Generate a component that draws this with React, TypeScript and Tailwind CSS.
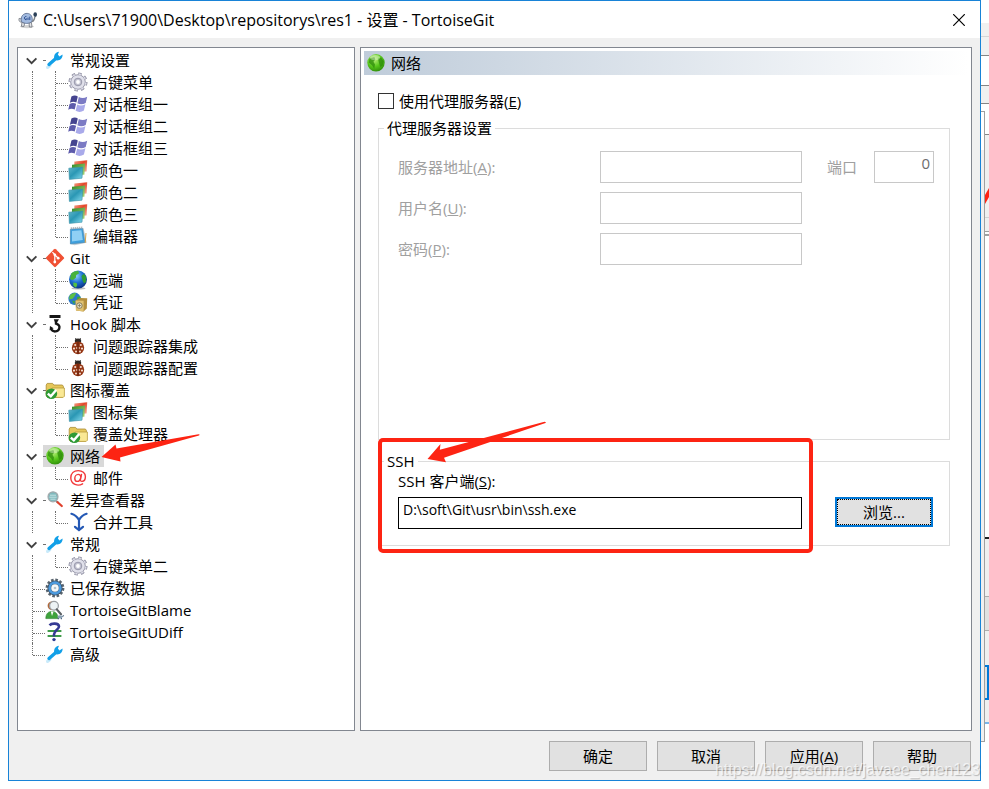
import { useState } from 'react';
import type { ReactNode } from 'react';

/* ---------- Icons ---------- */

function Svg({ children, box = '0 0 20 20' }: { children: ReactNode; box?: string }) {
  return (
    <svg viewBox={box} className="w-5 h-5 shrink-0" aria-hidden="true">
      {children}
    </svg>
  );
}

function WrenchIcon() {
  return (
    <Svg>
      <path d="M2.5 17.5 L5 15.5" stroke="#c9eafa" strokeWidth="3" strokeLinecap="round" />
      <path d="M4 14.5 L12 7.5" stroke="#12a0e8" strokeWidth="3.4" strokeLinecap="round" />
      <path
        d="M9.2 8.8 C8.6 5.2 10.4 2.2 14 1.8 L12.9 4.6 L14.4 6.4 L17.5 4.6 C18 8.2 15.2 10.6 11.8 10.4 Z"
        fill="#12a0e8"
      />
    </Svg>
  );
}

function GearIcon() {
  return (
    <Svg>
      <circle cx="10" cy="10" r="8" fill="none" stroke="#8d8da0" strokeWidth="3" strokeDasharray="3.3 2.98" />
      <circle cx="10" cy="10" r="7.3" fill="#e0e0ea" stroke="#8d8da0" strokeWidth="0.9" />
      <circle cx="10" cy="10" r="7.9" fill="none" stroke="#dcdce7" strokeWidth="1.6" strokeDasharray="2.2 4" strokeDashoffset="-0.5" />
      <circle cx="10" cy="10" r="3.8" fill="#c3c3d1" stroke="#9292a5" strokeWidth="0.9" />
      <circle cx="10" cy="10" r="1.9" fill="#fff" />
    </Svg>
  );
}

function WindowsIcon() {
  return (
    <Svg>
      <path d="M3.4 2.6 C5.6 1 8 1.2 9.8 2.4 L8.4 8.6 C6.4 7.4 4.2 7.3 1.9 8.8 Z" fill="#454490" />
      <path d="M10.8 3 C13.2 4.4 16 4.6 19.2 2.8 L17.7 9.1 C14.6 10.7 11.8 10.6 9.4 9.3 Z" fill="#7b7ac4" />
      <path d="M1.6 9.9 C3.8 8.5 6.2 8.6 8.1 9.8 L6.7 15.6 C4.6 14.5 2.4 14.3 0.2 15.8 Z" fill="#5d5bab" />
      <path d="M9.2 10.5 C11.4 11.7 14.2 11.8 17.4 10.2 L15.9 16.6 C13 18.5 10.1 18.3 7.6 16.8 Z" fill="#a9aaea" />
    </Svg>
  );
}

function ColorsIcon() {
  return (
    <Svg>
      <defs>
        <linearGradient id="clrRed" x1="0" y1="0" x2="1" y2="1">
          <stop offset="0" stopColor="#f3a58c" />
          <stop offset="0.45" stopColor="#e4472a" />
          <stop offset="1" stopColor="#f2b59e" />
        </linearGradient>
        <linearGradient id="clrGreen" x1="0" y1="0" x2="1" y2="1">
          <stop offset="0" stopColor="#2f8a24" />
          <stop offset="1" stopColor="#a9d67c" />
        </linearGradient>
        <linearGradient id="clrBlue" x1="0" y1="0" x2="1" y2="1">
          <stop offset="0" stopColor="#62b7cb" />
          <stop offset="0.45" stopColor="#2a97b4" />
          <stop offset="1" stopColor="#86dcef" />
        </linearGradient>
      </defs>
      <path d="M6.4 1.4 L19.2 0.3 L18.6 11.4 L6 12 Z" fill="url(#clrRed)" />
      <path d="M4 4.8 L17 3.6 L16.4 14.8 L3.8 15 Z" fill="url(#clrGreen)" />
      <path d="M0.8 8.2 L14.8 7 L14 18.2 L1.4 19.4 Z" fill="url(#clrBlue)" stroke="#3d90a6" strokeWidth="0.6" />
    </Svg>
  );
}

function NotepadIcon() {
  return (
    <Svg>
      <path d="M3 3 L15.6 2.2 L18.6 16.8 L6.5 19.2 L2 17.8 Z" fill="#c3cdd2" />
      <path d="M2.4 3.2 L14.6 2.5 L16.8 16.4 L2.4 18 Z" fill="#3f9fdc" stroke="#4787b2" strokeWidth="0.6" />
      <path d="M4 5 L13.4 4.3 L14.8 14 L4 15.6 Z" fill="#8fd0f5" />
      <path d="M2.8 2.3 L15 1.5" stroke="#9ea5aa" strokeWidth="2" strokeDasharray="1 1" />
      <path d="M17.2 16.8 L18 7" stroke="#d8a64a" strokeWidth="1" />
    </Svg>
  );
}

function GitIcon() {
  return (
    <Svg>
      <rect x="3.2" y="3.2" width="13.6" height="13.6" rx="1.2" transform="rotate(45 10 10)" fill="#f05033" />
      <path d="M7.4 4.2 L9.8 6.6 V14 M10 7 L13 10" stroke="#fff" strokeWidth="1.2" fill="none" />
      <circle cx="9.8" cy="6.8" r="1.4" fill="#fff" />
      <circle cx="9.8" cy="14" r="1.4" fill="#fff" />
      <circle cx="13.2" cy="10.2" r="1.4" fill="#fff" />
    </Svg>
  );
}

function GlobeIcon() {
  return (
    <Svg>
      <defs>
        <radialGradient id="globeBlue" cx="0.4" cy="0.3" r="0.75">
          <stop offset="0" stopColor="#8fd3ff" />
          <stop offset="0.5" stopColor="#1d6fd0" />
          <stop offset="1" stopColor="#0a2c7c" />
        </radialGradient>
      </defs>
      <ellipse cx="10.5" cy="18.4" rx="7" ry="1.2" fill="#bbb" />
      <circle cx="10" cy="9.6" r="9" fill="url(#globeBlue)" />
      <path d="M3 4 C5 1.5 8 0.8 10.4 1.2 L11 3.5 L8.2 5 L8 7.6 L5 10 L2 9.2 Z" fill="#46b23c" />
      <path d="M13.4 6 L16 3.8 L18.2 7 L18 12 L16 13.6 L14.6 10.4 Z" fill="#2f9d35" />
      <path d="M5.4 12.4 L8.6 13 L9.2 15 L8 17.8 L5.4 15.8 Z" fill="#57c140" />
    </Svg>
  );
}

function CredentialIcon() {
  return (
    <Svg>
      <circle cx="6.6" cy="6.8" r="6.2" fill="#2a78c8" />
      <path d="M1.6 3.8 C3.4 1.4 6 0.6 8.2 1.2 L6.4 4.6 L4.6 6.8 L1 7.4 Z" fill="#5cbf45" />
      <path d="M9 5 L12.3 4.6 L12.4 8.4 L9.6 9.6 Z M4 8.6 L7 9.2 L6 12.6 Z" fill="#3ea93b" />
      <path d="M7.6 8.4 L12.2 6 L19.2 6.2 L18.8 16.6 L15.6 19.4 L8 18.6 Z" fill="#b48f3d" />
      <path d="M7.6 8.4 L15.6 8.8 L15.6 19.4 L8 18.6 Z" fill="#e0c171" />
      <circle cx="11.4" cy="13.6" r="2.8" fill="#eee6cd" stroke="#77714f" strokeWidth="0.9" />
      <path d="M11.4 11.8 V15.4 M9.6 13.6 H13.2" stroke="#77714f" strokeWidth="0.8" />
    </Svg>
  );
}

function HookIcon() {
  return (
    <Svg>
      <path d="M4.5 1 H15.5 V4 H4.5 Z" fill="#151515" />
      <path d="M8.8 5.2 H14 L12 8.6 H10 Z" fill="#151515" />
      <path
        d="M11 7.4 V9.6 C14 10.6 15 12.2 14.2 14.6 C13 18 8 18.6 6 15"
        fill="none"
        stroke="#151515"
        strokeWidth="2.4"
      />
      <path d="M4.6 16.2 L5 12 L8.6 14.2 Z" fill="#151515" />
    </Svg>
  );
}

function BugIcon() {
  return (
    <Svg>
      <path d="M7.4 2 L8.6 4 M12.6 2 L11.4 4" stroke="#333" strokeWidth="0.9" />
      <ellipse cx="10" cy="5" rx="3.2" ry="2.4" fill="#2e2926" />
      <ellipse cx="10" cy="11.8" rx="6.2" ry="6.4" fill="#953614" />
      <path d="M10 5.6 V18" stroke="#501b0a" strokeWidth="0.8" />
      <g fill="#f5ddd0">
        <circle cx="7.2" cy="9" r="1.1" />
        <circle cx="12.8" cy="9" r="1.1" />
        <circle cx="6" cy="12.6" r="1.1" />
        <circle cx="14" cy="12.6" r="1.1" />
        <circle cx="8.6" cy="12" r="0.7" />
        <circle cx="11.4" cy="12" r="0.7" />
        <circle cx="8" cy="15.6" r="1" />
        <circle cx="12" cy="15.6" r="1" />
      </g>
    </Svg>
  );
}

function FolderCheckIcon() {
  return (
    <Svg>
      <path d="M1.2 5 L2.2 3.4 H7.6 L8.8 5 H17.4 L18.4 6.4 V16 L17.4 17.2 H2.2 L1.2 16 Z" fill="#e6c75a" stroke="#a98b32" strokeWidth="0.8" />
      <path d="M7 8 H19.4 V16.2 L18.2 17.4 H7 Z" fill="#fae894" stroke="#b79a3c" strokeWidth="0.8" />
      <ellipse cx="6.4" cy="13.8" rx="5.8" ry="5.2" fill="#2f9a35" />
      <path d="M2.8 13.6 L5.8 16.2 L11.2 10" stroke="#fff" strokeWidth="2.4" fill="none" />
    </Svg>
  );
}

function NetworkIcon() {
  return (
    <Svg>
      <defs>
        <radialGradient id="netGreen" cx="0.4" cy="0.3" r="0.75">
          <stop offset="0" stopColor="#b9f07a" />
          <stop offset="0.55" stopColor="#58c71c" />
          <stop offset="1" stopColor="#2c8a08" />
        </radialGradient>
      </defs>
      <circle cx="10" cy="9.8" r="8.7" fill="url(#netGreen)" />
      <path d="M3.4 5.6 L8.4 4 L9.4 6.6 L7.4 8.8 L9 11.4 L8.2 15.8 L6.2 12.4 L2.8 9.6 Z" fill="#2e8b0b" opacity="0.75" />
      <path d="M12 5.4 L15.2 4.4 L17.6 8.2 L16.6 12.4 L14.2 14 L13.2 10.4 Z" fill="#2e8b0b" opacity="0.75" />
      <ellipse cx="9" cy="4.6" rx="5" ry="2.6" fill="#fff" opacity="0.35" />
    </Svg>
  );
}

function MailIcon() {
  return (
    <Svg>
      <g fill="none" stroke="#f2383a" strokeWidth="1.4" strokeLinecap="round">
        <path d="M14.6 15.8 C10 18.6 3 16.6 2.8 10 C2.8 5.4 6 2.6 10.2 2.6 C14.4 2.6 17.4 5.2 17.4 8.6 C17.4 11.6 15.8 13.4 14 13.4 C12.6 13.4 12.2 12.4 12.5 11 L13.5 6.4" />
        <path d="M12.9 8.8 C12.5 7 11.4 6.4 10.2 6.4 C8.2 6.4 6.8 8.4 6.8 10.4 C6.8 12.4 7.8 13.4 9.2 13.4 C11 13.4 12.2 12 12.5 10.6" />
      </g>
    </Svg>
  );
}

function DiffViewerIcon() {
  return (
    <Svg>
      <path d="M11 11 L13 12.6" stroke="#8a8a8a" strokeWidth="2" />
      <path d="M12.6 12.2 L16.8 16" stroke="#e0402c" strokeWidth="2.2" strokeLinecap="round" />
      <circle cx="8" cy="6.8" r="5" fill="#7fb9bd" stroke="#a3a9ac" strokeWidth="1.2" />
      <path d="M5 5.2 H11 M4.4 7.2 H11.6 M5.4 9.2 H10.6" stroke="#d8eeee" strokeWidth="0.8" />
    </Svg>
  );
}

function MergeIcon() {
  return (
    <Svg>
      <path d="M3.4 1.8 C5.4 2.4 9 4.6 11 8 M18.6 1.8 C16.6 2.4 13 4.6 11 8 V17" stroke="#2358b5" strokeWidth="2.2" fill="none" strokeLinecap="round" />
      <path d="M7 14.8 L11 18 L15 14.8" stroke="#2358b5" strokeWidth="2.2" fill="none" strokeLinecap="round" />
    </Svg>
  );
}

function SavedDataIcon() {
  return (
    <Svg>
      <circle cx="10" cy="10" r="8.2" fill="none" stroke="#59646e" strokeWidth="2.4" strokeDasharray="2.6 1.7" />
      <circle cx="10" cy="10" r="7.6" fill="#3a4f63" />
      <circle cx="10" cy="10" r="5.4" fill="none" stroke="#4c9ade" strokeWidth="2.6" />
      <circle cx="10" cy="10" r="3.8" fill="#f4f8fb" />
      <circle cx="10" cy="10" r="1.3" fill="#b4c3cd" />
    </Svg>
  );
}

function BlameIcon() {
  return (
    <Svg>
      <path d="M0.8 18.6 C0.8 13.6 3.4 11.4 6.8 11.4 C10.4 11.4 13 13.6 13 18.6 Z" fill="#3fa33c" stroke="#2c7d2d" strokeWidth="0.6" />
      <path d="M5.8 11.4 L7 16 L8.6 11.6 Z" fill="#fff" />
      <circle cx="6.8" cy="5.8" r="4.2" fill="#b1683a" />
      <circle cx="9" cy="5.8" r="4.4" fill="#eef3f5" stroke="#9b9fa3" strokeWidth="1.3" />
      <path d="M11.8 9.4 L16 14.2" stroke="#5d6165" strokeWidth="2.2" strokeLinecap="round" />
      <ellipse cx="15" cy="16.8" rx="2.6" ry="1.6" fill="#8aa0b4" />
      <path d="M17.4 16.6 L18.8 15.4 M13.4 18 V19.2 M16.4 18 V19.2" stroke="#546c84" strokeWidth="1.2" />
    </Svg>
  );
}

function UDiffIcon() {
  return (
    <Svg>
      <path d="M2.6 9 H16.4 M2.6 14 H16.4" stroke="#3f9a48" strokeWidth="2.2" />
      <path d="M4.6 3.4 C6.4 1 13.6 0.8 14 4.4 C14.2 7.6 9.4 8 9 12.4 V14.6" stroke="#353a94" strokeWidth="2.6" fill="none" />
      <circle cx="9" cy="17.6" r="1.7" fill="#2f3a92" />
    </Svg>
  );
}

function TurtleIcon() {
  return (
    <Svg>
      <ellipse cx="9" cy="16.6" rx="7" ry="1.6" fill="#d4d4d4" />
      <path d="M4 12 L3.4 16.4 H6 L6.6 13.4 Z M11 13 L11.4 17 H14 L13.4 12.4 Z" fill="#e3e5e8" stroke="#6d7178" strokeWidth="0.8" />
      <path d="M1 8.4 C0.4 11 2 12.6 4 12 L5 9 Z" fill="#d9dce0" stroke="#6d7178" strokeWidth="0.7" />
      <path d="M3.4 11.6 C2.2 5.8 6 3.2 9.2 3.4 C13 3.6 15 7 14 11.6 C10.6 14 6.6 14 3.4 11.6 Z" fill="#a3bbe0" stroke="#5d6f92" strokeWidth="0.9" />
      <path d="M8.4 6.4 C6 6 5.6 9.8 8.2 9.8 V8.2 M10 7.6 V10 M11.8 6.6 V10" stroke="#1c3f86" strokeWidth="0.9" fill="none" />
      <path d="M14 11.6 C16.4 11 16.6 8.6 16.8 6.8" stroke="#7d8288" strokeWidth="1.4" fill="none" />
      <ellipse cx="17.2" cy="4.6" rx="1.8" ry="2.4" fill="#2b4058" />
    </Svg>
  );
}

/* ---------- Tree ---------- */

interface TreeItem {
  label: string;
  icon: ReactNode;
  selected?: boolean;
  children?: TreeItem[];
}

const tree: TreeItem[] = [
  {
    label: '常规设置',
    icon: <WrenchIcon />,
    children: [
      { label: '右键菜单', icon: <GearIcon /> },
      { label: '对话框组一', icon: <WindowsIcon /> },
      { label: '对话框组二', icon: <WindowsIcon /> },
      { label: '对话框组三', icon: <WindowsIcon /> },
      { label: '颜色一', icon: <ColorsIcon /> },
      { label: '颜色二', icon: <ColorsIcon /> },
      { label: '颜色三', icon: <ColorsIcon /> },
      { label: '编辑器', icon: <NotepadIcon /> },
    ],
  },
  {
    label: 'Git',
    icon: <GitIcon />,
    children: [
      { label: '远端', icon: <GlobeIcon /> },
      { label: '凭证', icon: <CredentialIcon /> },
    ],
  },
  {
    label: 'Hook 脚本',
    icon: <HookIcon />,
    children: [
      { label: '问题跟踪器集成', icon: <BugIcon /> },
      { label: '问题跟踪器配置', icon: <BugIcon /> },
    ],
  },
  {
    label: '图标覆盖',
    icon: <FolderCheckIcon />,
    children: [
      { label: '图标集', icon: <ColorsIcon /> },
      { label: '覆盖处理器', icon: <FolderCheckIcon /> },
    ],
  },
  {
    label: '网络',
    icon: <NetworkIcon />,
    selected: true,
    children: [{ label: '邮件', icon: <MailIcon /> }],
  },
  {
    label: '差异查看器',
    icon: <DiffViewerIcon />,
    children: [{ label: '合并工具', icon: <MergeIcon /> }],
  },
  {
    label: '常规',
    icon: <WrenchIcon />,
    children: [{ label: '右键菜单二', icon: <GearIcon /> }],
  },
  { label: '已保存数据', icon: <SavedDataIcon /> },
  { label: 'TortoiseGitBlame', icon: <BlameIcon /> },
  { label: 'TortoiseGitUDiff', icon: <UDiffIcon /> },
  { label: '高级', icon: <WrenchIcon /> },
];

// vertical guide line
function Guide({ last, wide }: { last?: boolean; wide?: boolean }) {
  return (
    <span
      className={`shrink-0 border-r border-dotted border-[#707070] ${wide ? 'w-[23px]' : 'w-[15px]'} ${
        last ? 'h-3' : 'h-full'
      }`}
    />
  );
}

// short line that leads from the guide to a leaf's icon
function Stub() {
  return <span className="w-3 h-[13px] shrink-0 border-b border-dotted border-[#707070]" />;
}

function Leaf({ item, last, nested }: { item: TreeItem; last: boolean; nested?: boolean }) {
  return (
    <li className="flex h-[22px]">
      {nested && <Guide />}
      <Guide last={last} wide={nested} />
      <Stub />
      <span className="flex items-center gap-[5px] whitespace-nowrap">
        {item.icon}
        {item.label}
      </span>
    </li>
  );
}

function Branch({ item }: { item: TreeItem }) {
  const [open, setOpen] = useState(true);
  return (
    <li>
      <div className="flex h-[22px]">
        <button
          type="button"
          aria-label={item.label}
          aria-expanded={open}
          onClick={() => setOpen(!open)}
          className="w-[25px] pl-2 pt-px flex items-center"
        >
          <svg viewBox="0 0 12 8" className={`w-3 h-2 ${open ? '' : '-rotate-90'}`} aria-hidden="true">
            <path d="M0.8 1.4 L5.6 6.2 L10.4 1.4" stroke="#404040" strokeWidth="1.9" fill="none" />
          </svg>
        </button>
        <div
          className={`relative flex items-center pr-1 whitespace-nowrap ${item.selected ? 'bg-[#d9d9d9]' : ''}`}
        >
          <span className="w-[2px] h-px border-b border-dotted border-[#707070]" />
          {item.icon}
          <span className="pl-[5px]">{item.label}</span>
          {item.selected && (
            <svg
              viewBox="0 0 100 30"
              className="absolute left-full -top-3 z-10 w-[100px] h-[30px] -ml-1"
              aria-hidden="true"
            >
              <path
                d="M1.5 24 L15.5 11.5 L16.5 15.5 L98.5 1.2 Q100.5 1.6 99 2.6 L20 24.5 L20.5 28.5 Z"
                fill="#fd2413"
              />
            </svg>
          )}
        </div>
      </div>
      {open && (
        <ul>
          {item.children?.map((child, i) => (
            <Leaf key={child.label} item={child} nested last={i === item.children!.length - 1} />
          ))}
        </ul>
      )}
    </li>
  );
}

/* ---------- Form parts ---------- */

function FooterButton({ children }: { children: ReactNode }) {
  return (
    <button type="button" className="w-[98px] h-[30px] bg-[#e1e1e1] border border-[#adadad]">
      {children}
    </button>
  );
}

function ProxyField({ id, label, hotkey, type = 'text', extra }: {
  id: string;
  label: string;
  hotkey: string;
  type?: string;
  extra?: ReactNode;
}) {
  return (
    <div className="grid grid-cols-[202px_1fr_132px] items-center">
      <label htmlFor={id} className="text-[#a0a0a0]">
        {label}(<u>{hotkey}</u>):
      </label>
      <input id={id} type={type} disabled className="w-full min-w-0 h-8 px-1 bg-white border border-[#c8c8c8]" />
      {extra}
    </div>
  );
}

// edges of the windows that stay visible to the right of the dialog
function BackgroundWindows() {
  return (
    <div className="w-2 shrink-0 flex flex-col" aria-hidden="true">
      <div className="h-[23px]" />
      <div className="h-[14px] bg-[#f0f0f0] border-b border-[#d5d5d5]" />
      <div className="h-[19px] bg-[#f0f0f0] border-b border-[#858585]" />
      <div className="h-[29px]" />
      <div className="h-[19px] bg-[#f0f0f0] border-y border-[#858585]" />
      <div className="h-[7px]" />
      <div className="h-[631px] flex">
        <div className="w-1 border-t border-r border-b border-[#a0a0a0] bg-[#f0f0f0]">
          <div className="h-[38px] bg-white" />
        </div>
        <div className="w-1 overflow-hidden">
          <div className="h-[23px]" />
          <div className="h-[84px] bg-[#f0f0f0] border-t border-t-[#858585] border-b border-b-[#d5d5d5]">
            <svg viewBox="0 0 4 18" className="block w-1 h-[18px] mt-[52px]">
              <path d="M0 8 L4 1 V10 L0 17 Z" fill="#fd2413" />
            </svg>
          </div>
          <div className="h-[14px] bg-[#f0f0f0] border-b border-[#a0a0a0]" />
          <div className="h-[2px]" />
          <div className="h-[2px] bg-[#a0a0a0]" />
          <div className="h-[301px]" />
          <div className="h-[2px] bg-[#202020]" />
          <div className="h-[57px] bg-[#f0f0f0]" />
          <div className="h-[35px] bg-[#e1e1e1] border-y border-[#adadad]" />
          <div className="h-[34px] bg-[#f0f0f0]" />
          <div className="h-[35px] bg-[#e1e1e1] border-2 border-l-0 border-[#0078d7]" />
          <div className="h-[24px] bg-[#f0f0f0] border-b-2 border-[#7ab6ea]" />
        </div>
      </div>
    </div>
  );
}

export default function App() {
  const [useProxy, setUseProxy] = useState(false);
  const [sshClient, setSshClient] = useState('D:\\soft\\Git\\usr\\bin\\ssh.exe');

  return (
    <div className="min-h-screen flex pl-2 bg-white text-black text-[15px] leading-5 font-['Open_Sans','Noto_Sans_CJK_SC',sans-serif]">
      <div className="relative flex-1 min-w-0 mb-2 flex flex-col border border-[#1883d7] bg-[#f0f0f0]">
        {/* Title bar */}
        <header className="h-[37px] bg-white flex items-center pl-[9px] pr-[15px] gap-[5px]">
          <TurtleIcon />
          <h1 className="flex-1 truncate text-base leading-6">
            C:\Users\71900\Desktop\repositorys\res1 - 设置 - TortoiseGit
          </h1>
          <button type="button" aria-label="关闭">
            <svg viewBox="0 0 12 12" className="w-3 h-3" aria-hidden="true">
              <path d="M0.2 0.2 L11.8 11.8 M11.8 0.2 L0.2 11.8" stroke="#000" strokeWidth="1.2" />
            </svg>
          </button>
        </header>

        <main className="flex-1 flex gap-[5px] px-2 pt-[9px]">
          {/* Settings tree */}
          <nav className="w-[338px] shrink-0 bg-white border border-[#828790] pt-px">
            <ul>
              {tree.map((item, i) =>
                item.children ? (
                  <Branch key={item.label} item={item} />
                ) : (
                  <Leaf key={item.label} item={item} last={i === tree.length - 1} />
                ),
              )}
            </ul>
          </nav>

          {/* Network page */}
          <section className="flex-1 min-w-0 bg-white border border-[#828790] p-[3px]">
            <h2 className="h-6 pl-[2px] flex items-center gap-[5px] bg-linear-to-r from-[#bfccda] to-white">
              <NetworkIcon />
              网络
            </h2>

            <div className="pl-[14px] pr-[18px] pt-4">
              <label className="flex items-center gap-[5px]">
                <input
                  type="checkbox"
                  checked={useProxy}
                  onChange={(e) => setUseProxy(e.target.checked)}
                  className="appearance-none w-4 h-4 bg-white border border-[#333] checked:bg-[#333]"
                />
                <span>
                  使用代理服务器(<u>E</u>)
                </span>
              </label>

              <fieldset className="mt-[7px] min-h-[322px] border border-[#dcdcdc]">
                <legend className="ml-[5px] px-[3px]">代理服务器设置</legend>
                <div className="pl-[19px] pr-[15px] pt-[13px] flex flex-col gap-[9px]">
                  <ProxyField
                    id="server"
                    label="服务器地址"
                    hotkey="A"
                    extra={
                      <div className="flex items-center justify-end gap-[17px]">
                        <label htmlFor="port" className="text-[#a0a0a0]">
                          端口
                        </label>
                        <input
                          id="port"
                          type="text"
                          defaultValue="0"
                          disabled
                          className="w-[60px] h-8 pr-[3px] pb-2 text-right text-[#6d6d6d] bg-white border border-[#c8c8c8]"
                        />
                      </div>
                    }
                  />
                  <ProxyField id="user" label="用户名" hotkey="U" />
                  <ProxyField id="password" label="密码" hotkey="P" type="password" />
                </div>
              </fieldset>

              <div className="relative mt-[11px]">
                <fieldset className="border border-[#dcdcdc]">
                  <legend className="ml-[5px] px-[3px]">SSH</legend>
                  <div className="pl-[19px] pr-4 pb-4">
                    <label htmlFor="ssh">
                      SSH 客户端(<u>S</u>):
                    </label>
                    <div className="flex gap-[33px] mt-[6px]">
                      <input
                        id="ssh"
                        type="text"
                        value={sshClient}
                        onChange={(e) => setSshClient(e.target.value)}
                        className="flex-1 min-w-0 h-8 px-1 pb-2 text-sm bg-white border border-black"
                      />
                      <button
                        type="button"
                        className="w-[98px] h-[30px] bg-[#e1e1e1] border-2 border-[#0078d7] flex"
                      >
                        <span className="flex-1 h-full flex items-center justify-center border border-dotted border-black">
                          浏览...
                        </span>
                      </button>
                    </div>
                  </div>
                </fieldset>

                {/* Red marker box and arrow */}
                <div className="absolute left-0 -top-[13px] -bottom-[7px] right-[137px] border-4 border-[#fd2413] rounded-[5px] pointer-events-none" />
                <svg
                  viewBox="0 0 120 42"
                  className="absolute left-[49px] -top-[30px] w-[120px] h-[42px] pointer-events-none"
                  aria-hidden="true"
                >
                  <path
                    d="M0.5 38 L13.5 23 L12.8 28.7 L117.5 0.7 Q119.5 0.8 118.5 2 L17 36.7 L19 41.3 Z"
                    fill="#fd2413"
                  />
                </svg>
              </div>
            </div>
          </section>
        </main>

        <footer className="flex justify-end gap-[10px] pt-[10px] pb-[9px] pr-[9px]">
          <FooterButton>确定</FooterButton>
          <FooterButton>取消</FooterButton>
          <FooterButton>
            应用(<u>A</u>)
          </FooterButton>
          <FooterButton>帮助</FooterButton>
        </footer>

        <p className="absolute right-0 bottom-0 text-base leading-5 text-white/70 font-['Liberation_Sans',sans-serif] text-shadow-[1px_1px_1px_#00000040] pointer-events-none">
          https://blog.csdn.net/javaee_chen123
        </p>
      </div>

      <BackgroundWindows />
    </div>
  );
}
